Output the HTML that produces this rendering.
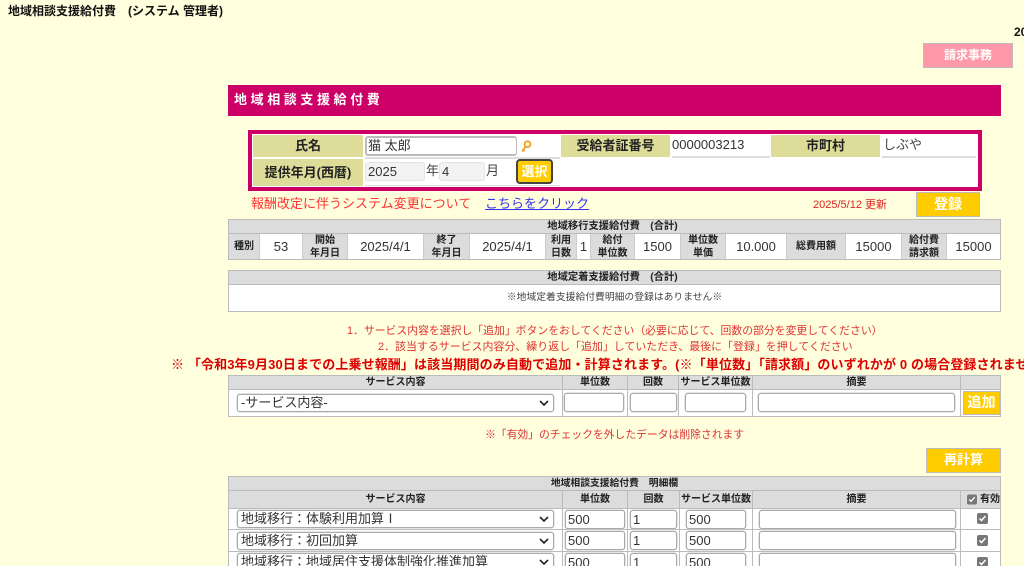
<!DOCTYPE html>
<html lang="ja"><head><meta charset="utf-8"><title>地域相談支援給付費</title>
<style>
html,body{margin:0;padding:0;width:1024px;height:566px;overflow:hidden;background:#ffffdd}
body{position:relative;font-family:"Liberation Sans","Noto Sans CJK JP",sans-serif;color:#222}
#p{position:absolute;left:0;top:0;width:1024px;height:566px;overflow:hidden;filter:blur(.35px)}
.a{position:absolute;box-sizing:border-box;white-space:nowrap}
.c{display:flex;align-items:center;justify-content:center;text-align:center;line-height:16px}
.h{background:#dcdcdc;font-weight:bold;font-size:10px;color:#222;line-height:13px}
.w{background:#fff;font-size:13px;color:#333}
.l{background:#dddd99;font-weight:bold;font-size:13px;color:#222}
.b{background:#ffcc00;color:#fff;font-weight:bold;font-size:14px;border:1px solid #bbb;padding-bottom:2px}
.i{background:#fff;border:1px solid #aaa;border-radius:3px;box-shadow:0 0 0 .5px #ccc;font-size:13px;line-height:16px;color:#333;padding-left:2px;display:flex;align-items:center}
.s{background:#fff;border:1px solid #aaa;border-radius:3px;box-shadow:0 0 0 .5px #ccc;font-size:13px;line-height:16px;color:#333;padding-left:3px;display:flex;align-items:center;overflow:hidden}
.s svg{position:absolute;right:4px;top:50%;margin-top:-3px}
</style></head><body><div id="p">
<div class="a" style="left:8px;top:3px;font-size:12px;line-height:16px;font-weight:bold;color:#111">地域相談支援給付費　(システム 管理者)</div>
<div class="a" style="left:1014px;top:24px;font-size:12px;line-height:16px;font-weight:bold;color:#111">20</div>
<div class="a c" style="left:923px;top:43px;width:90px;height:25px;background:#ff99aa;border:1px solid #bbb;color:#fff;font-weight:bold;font-size:12px;padding-bottom:1px">請求事務</div>

<div class="a" style="left:228px;top:85px;width:773px;height:31px;background:#cc0066;color:#fff;font-weight:bold;font-size:13px;line-height:29px;padding-left:6px;letter-spacing:3.6px">地域相談支援給付費</div>

<div class="a" style="left:248px;top:130px;width:734px;height:61px;border:4px solid #cc0066;background:#fff"></div>
<div class="a c l" style="left:253px;top:135px;width:110px;height:22px">氏名</div>
<div class="a c l" style="left:253px;top:159px;width:110px;height:27px">提供年月(西暦)</div>
<div class="a i" style="left:365px;top:136px;width:152px;height:20px;border:2px solid #bbb;border-right-width:1px;padding-left:1px;box-shadow:none">猫 太郎</div>
<svg class="a" style="left:520px;top:140px" width="12" height="13" viewBox="0 0 12 13"><circle cx="7.5" cy="4.2" r="3" fill="#fff6d0" stroke="#ee9922" stroke-width="1.6"/><path d="M5.5 6.5L2.2 11.5M3.2 10l1.4 1" stroke="#ee9922" stroke-width="1.7" fill="none"/></svg>
<div class="a" style="left:365px;top:157px;width:195px;height:2px;background:#ddd"></div>
<div class="a c l" style="left:561px;top:135px;width:109px;height:22px">受給者証番号</div>
<div class="a" style="left:672px;top:137px;font-size:13px;line-height:16px;color:#333">0000003213</div>
<div class="a" style="left:672px;top:156px;width:98px;height:2px;background:#ddd"></div>
<div class="a c l" style="left:771px;top:135px;width:109px;height:22px">市町村</div>
<div class="a" style="left:883px;top:137px;font-size:13px;line-height:16px;color:#444">しぶや</div>
<div class="a" style="left:882px;top:156px;width:94px;height:2px;background:#ddd"></div>
<div class="a i" style="left:365px;top:162px;width:60px;height:19px;background:#f3f3f3;border-color:#e4e4e4;box-shadow:none">2025</div>
<div class="a" style="left:426px;top:163px;font-size:13px;line-height:16px;color:#444">年</div>
<div class="a i" style="left:439px;top:162px;width:46px;height:19px;background:#f3f3f3;border-color:#e4e4e4;padding-left:2px;box-shadow:none">4</div>
<div class="a" style="left:486px;top:163px;font-size:13px;line-height:16px;color:#444">月</div>
<div class="a c b" style="left:516px;top:159px;width:37px;height:25px;border:2px solid #444;border-radius:4px;font-size:13px;padding-bottom:0">選択</div>
<div class="a" style="left:365px;top:185px;width:195px;height:1px;background:#ddd"></div>

<div class="a" style="left:251px;top:196px;font-size:13px;line-height:16px;color:#ff3333">報酬改定に伴うシステム変更について</div>
<div class="a" style="left:485px;top:196px;font-size:13px;line-height:16px;color:#3333ee;text-decoration:underline">こちらをクリック</div>
<div class="a" style="left:813px;top:197px;font-size:11px;line-height:16px;color:#dd2222">2025/5/12 更新</div>
<div class="a c b" style="left:916px;top:192px;width:64px;height:25px">登録</div>

<!-- table 1 -->
<div class="a" style="left:228px;top:219px;width:773px;height:41px;background:#bbb"></div>
<div class="a c h" style="left:229px;top:220px;width:771px;height:13px;font-size:10.3px;padding-right:4px">地域移行支援給付費　(合計)</div>
<div class="a" style="left:229px;top:234px;width:771px;height:25px;background:#ccc"></div>
<div class="a c h" style="left:229px;top:234px;width:30px;height:25px">種別</div>
<div class="a c w" style="left:260px;top:234px;width:42px;height:25px">53</div>
<div class="a c h" style="left:303px;top:234px;width:44px;height:25px">開始<br>年月日</div>
<div class="a c w" style="left:348px;top:234px;width:75px;height:25px">2025/4/1</div>
<div class="a c h" style="left:424px;top:234px;width:45px;height:25px">終了<br>年月日</div>
<div class="a c w" style="left:470px;top:234px;width:75px;height:25px">2025/4/1</div>
<div class="a c h" style="left:546px;top:234px;width:30px;height:25px">利用<br>日数</div>
<div class="a c w" style="left:577px;top:234px;width:13px;height:25px">1</div>
<div class="a c h" style="left:591px;top:234px;width:43px;height:25px">給付<br>単位数</div>
<div class="a c w" style="left:635px;top:234px;width:45px;height:25px">1500</div>
<div class="a c h" style="left:681px;top:234px;width:44px;height:25px">単位数<br>単価</div>
<div class="a c w" style="left:726px;top:234px;width:60px;height:25px">10.000</div>
<div class="a c h" style="left:787px;top:234px;width:58px;height:25px">総費用額</div>
<div class="a c w" style="left:846px;top:234px;width:55px;height:25px">15000</div>
<div class="a c h" style="left:902px;top:234px;width:44px;height:25px">給付費<br>請求額</div>
<div class="a c w" style="left:947px;top:234px;width:53px;height:25px">15000</div>

<!-- table 2 -->
<div class="a" style="left:228px;top:270px;width:773px;height:42px;background:#bbb"></div>
<div class="a c h" style="left:229px;top:271px;width:771px;height:13px;font-size:10.3px;padding-right:4px">地域定着支援給付費　(合計)</div>
<div class="a c w" style="left:229px;top:285px;width:771px;height:26px;font-size:9.8px;color:#444">※地域定着支援給付費明細の登録はありません※</div>

<div class="a" style="left:347px;top:323px;font-size:10.85px;line-height:16px;color:#dd3333">1．サービス内容を選択し「追加」ボタンをおしてください（必要に応じて、回数の部分を変更してください）</div>
<div class="a" style="left:378px;top:339px;font-size:10.95px;line-height:16px;color:#dd3333">2．該当するサービス内容分、繰り返し「追加」していただき、最後に「登録」を押してください</div>
<div class="a" style="left:171px;top:356px;font-size:13px;line-height:18px;font-weight:bold;color:#dd0000;letter-spacing:.12px">※ 「令和3年9月30日までの上乗せ報酬」は該当期間のみ自動で追加・計算されます。(※「単位数」「請求額」のいずれかが 0 の場合登録されません)</div>

<!-- table 3 -->
<div class="a" style="left:228px;top:375px;width:773px;height:42px;background:#bbb"></div>
<div class="a c h" style="left:229px;top:376px;width:333px;height:13px">サービス内容</div>
<div class="a c h" style="left:563px;top:376px;width:64px;height:13px">単位数</div>
<div class="a c h" style="left:628px;top:376px;width:50px;height:13px">回数</div>
<div class="a c h" style="left:679px;top:376px;width:73px;height:13px">サービス単位数</div>
<div class="a c h" style="left:753px;top:376px;width:207px;height:13px">摘要</div>
<div class="a c h" style="left:961px;top:376px;width:39px;height:13px"></div>
<div class="a w" style="left:229px;top:390px;width:333px;height:26px"></div>
<div class="a w" style="left:563px;top:390px;width:64px;height:26px"></div>
<div class="a w" style="left:628px;top:390px;width:50px;height:26px"></div>
<div class="a w" style="left:679px;top:390px;width:73px;height:26px"></div>
<div class="a w" style="left:753px;top:390px;width:207px;height:26px"></div>
<div class="a w" style="left:961px;top:390px;width:39px;height:26px"></div>
<div class="a s" style="left:237px;top:394px;width:317px;height:18px">-サービス内容-<svg width="10" height="6" viewBox="0 0 10 6"><path d="M1 1l4 4 4-4" fill="none" stroke="#222" stroke-width="1.6"/></svg></div>
<div class="a i" style="left:564px;top:393px;width:60px;height:19px"></div>
<div class="a i" style="left:630px;top:393px;width:47px;height:19px"></div>
<div class="a i" style="left:685px;top:393px;width:61px;height:19px"></div>
<div class="a i" style="left:758px;top:393px;width:197px;height:19px"></div>
<div class="a c b" style="left:963px;top:391px;width:37px;height:24px">追加</div>

<div class="a" style="left:485px;top:427px;font-size:10.8px;line-height:16px;color:#dd3333">※「有効」のチェックを外したデータは削除されます</div>
<div class="a c b" style="left:926px;top:448px;width:75px;height:25px;font-size:13px">再計算</div>

<!-- table 4 -->
<div class="a" style="left:228px;top:476px;width:773px;height:90px;background:#bbb"></div>
<div class="a c h" style="left:229px;top:477px;width:771px;height:13px;font-size:9.8px">地域相談支援給付費　明細欄</div>
<div class="a c h" style="left:229px;top:491px;width:333px;height:17px">サービス内容</div>
<div class="a c h" style="left:563px;top:491px;width:64px;height:17px">単位数</div>
<div class="a c h" style="left:628px;top:491px;width:51px;height:17px">回数</div>
<div class="a c h" style="left:680px;top:491px;width:72px;height:17px">サービス単位数</div>
<div class="a c h" style="left:753px;top:491px;width:207px;height:17px">摘要</div>
<div class="a c h" style="left:961px;top:491px;width:39px;height:17px;justify-content:flex-start;padding-left:6px"><svg width="11" height="11" viewBox="0 0 11 11" style="margin-right:3px"><rect width="11" height="11" rx="2" fill="#777"/><path d="M2.5 5.5l2 2 4-4.5" fill="none" stroke="#fff" stroke-width="1.5"/></svg>有効</div>

<!-- row 1 -->
<div class="a w" style="left:229px;top:509px;width:333px;height:20px"></div>
<div class="a w" style="left:563px;top:509px;width:64px;height:20px"></div>
<div class="a w" style="left:628px;top:509px;width:51px;height:20px"></div>
<div class="a w" style="left:680px;top:509px;width:72px;height:20px"></div>
<div class="a w" style="left:753px;top:509px;width:207px;height:20px"></div>
<div class="a w" style="left:961px;top:509px;width:39px;height:20px"></div>
<div class="a s" style="left:237px;top:510px;width:317px;height:18px">地域移行：体験利用加算Ⅰ<svg width="10" height="6" viewBox="0 0 10 6"><path d="M1 1l4 4 4-4" fill="none" stroke="#222" stroke-width="1.6"/></svg></div>
<div class="a i" style="left:565px;top:510px;width:60px;height:19px">500</div>
<div class="a i" style="left:630px;top:510px;width:47px;height:19px">1</div>
<div class="a i" style="left:686px;top:510px;width:60px;height:19px">500</div>
<div class="a i" style="left:759px;top:510px;width:197px;height:19px"></div>
<svg class="a" style="left:977px;top:513px" width="11" height="11" viewBox="0 0 11 11"><rect width="11" height="11" rx="2" fill="#777"/><path d="M2.5 5.5l2 2 4-4.5" fill="none" stroke="#fff" stroke-width="1.5"/></svg>

<!-- row 2 -->
<div class="a w" style="left:229px;top:530px;width:333px;height:21px"></div>
<div class="a w" style="left:563px;top:530px;width:64px;height:21px"></div>
<div class="a w" style="left:628px;top:530px;width:51px;height:21px"></div>
<div class="a w" style="left:680px;top:530px;width:72px;height:21px"></div>
<div class="a w" style="left:753px;top:530px;width:207px;height:21px"></div>
<div class="a w" style="left:961px;top:530px;width:39px;height:21px"></div>
<div class="a s" style="left:237px;top:532px;width:317px;height:18px">地域移行：初回加算<svg width="10" height="6" viewBox="0 0 10 6"><path d="M1 1l4 4 4-4" fill="none" stroke="#222" stroke-width="1.6"/></svg></div>
<div class="a i" style="left:565px;top:531px;width:60px;height:19px">500</div>
<div class="a i" style="left:630px;top:531px;width:47px;height:19px">1</div>
<div class="a i" style="left:686px;top:531px;width:60px;height:19px">500</div>
<div class="a i" style="left:759px;top:531px;width:197px;height:19px"></div>
<svg class="a" style="left:977px;top:535px" width="11" height="11" viewBox="0 0 11 11"><rect width="11" height="11" rx="2" fill="#777"/><path d="M2.5 5.5l2 2 4-4.5" fill="none" stroke="#fff" stroke-width="1.5"/></svg>

<!-- row 3 -->
<div class="a w" style="left:229px;top:552px;width:333px;height:14px"></div>
<div class="a w" style="left:563px;top:552px;width:64px;height:14px"></div>
<div class="a w" style="left:628px;top:552px;width:51px;height:14px"></div>
<div class="a w" style="left:680px;top:552px;width:72px;height:14px"></div>
<div class="a w" style="left:753px;top:552px;width:207px;height:14px"></div>
<div class="a w" style="left:961px;top:552px;width:39px;height:14px"></div>
<div class="a s" style="left:237px;top:553px;width:317px;height:18px">地域移行：地域居住支援体制強化推進加算<svg width="10" height="6" viewBox="0 0 10 6"><path d="M1 1l4 4 4-4" fill="none" stroke="#222" stroke-width="1.6"/></svg></div>
<div class="a i" style="left:565px;top:553px;width:60px;height:19px">500</div>
<div class="a i" style="left:630px;top:553px;width:47px;height:19px">1</div>
<div class="a i" style="left:686px;top:553px;width:60px;height:19px">500</div>
<div class="a i" style="left:759px;top:553px;width:197px;height:19px"></div>
<svg class="a" style="left:977px;top:557px" width="11" height="11" viewBox="0 0 11 11"><rect width="11" height="11" rx="2" fill="#777"/><path d="M2.5 5.5l2 2 4-4.5" fill="none" stroke="#fff" stroke-width="1.5"/></svg>
</div></body></html>
